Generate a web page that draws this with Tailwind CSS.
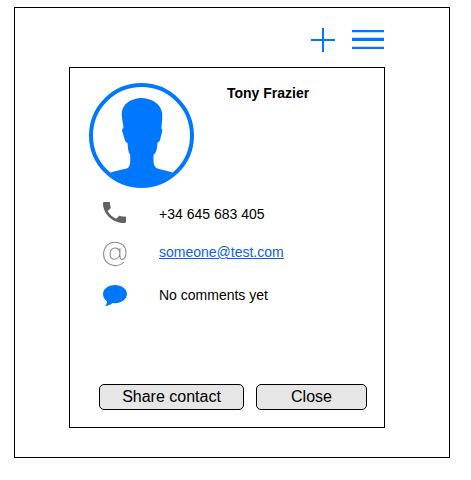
<!DOCTYPE html>
<html lang="en">
<head>
<meta charset="utf-8">
<title>Contact</title>
<script src="https://cdn.jsdelivr.net/npm/@tailwindcss/browser@4"></script>
</head>
<body class="bg-white text-black font-['Liberation_Sans',Arial,sans-serif] overflow-hidden">
<main class="ml-[14px] mt-[7px] w-[436px] h-[451px] border border-black">
  <header class="flex h-[59px] pt-5 pl-[296px] gap-[17px]">
    <svg class="w-6 h-6 shrink-0" viewBox="0 0 24 24" fill="#0077ff"><path d="M11 0h2v24h-2zM0 11h24v2H0z"/></svg>
    <svg class="w-8 h-6 shrink-0" viewBox="0 0 32 24" fill="#0077ff"><path d="M0 2h32v2.25H0zM0 9.700h32v3.300H0zM0 18.750h32V21H0z"/></svg>
  </header>
  <section class="ml-[54px] w-[316px] h-[361px] border border-black flex flex-col">
    <div class="flex pt-[15px] pl-[19px] gap-[33px]">
      <svg class="w-[105px] h-[105px] shrink-0" viewBox="0 0 105 105" fill="#0077ff">
        <circle cx="52.5" cy="52.5" r="50.5" fill="none" stroke="#0077ff" stroke-width="4"/>
        <path d="M21 89.800C26 87.800 32 87 37 85.800C40.500 85 41.300 81 41.200 77V71.500C39.500 70 39 66 38.500 60C36.500 59.500 35.800 57 35 54C34 50 32 46 34 45.500L34.500 44C33.500 39 33 35 32.700 31C33 25 36 20.500 41 17.700C46 15.400 50 14.900 53 14.900C57 15 60 16.300 64 17.700C69 20.500 72.800 25 73.200 31V37L72.300 45.400C74.500 46 72.500 51 71.700 54.500C71 57.500 70.500 59 68.500 59.500C68 66 67.500 70 64.500 71.800V77C64.600 81 65.500 84.500 68.500 85.500C73 87 79 87.600 84 89.800A49 49 0 0 1 52.500 102A49 49 0 0 1 21 89.800Z"/>
      </svg>
      <h1 class="text-[14px] leading-[20px] font-bold whitespace-nowrap">Tony Frazier</h1>
    </div>
    <ul class="pl-[33px] text-[14px]">
      <li class="flex items-center h-[49px] gap-8">
        <svg class="w-6 h-[21px] shrink-0" viewBox="0 0 24 21" fill="#626262"><path transform="scale(1.2778 1.1667) translate(-3 -3)" d="M6.620 10.790c1.440 2.830 3.760 5.140 6.590 6.590l2.200-2.200c.27-.27.67-.36 1.020-.24 1.120.37 2.330.57 3.570.57.55 0 1 .45 1 1V20c0 .55-.45 1-1 1-9.390 0-17-7.610-17-17 0-.55.45-1 1-1h3.500c.55 0 1 .45 1 1 0 1.250.2 2.450.57 3.570.11.35.03.74-.25 1.020l-2.200 2.200z"/></svg>
        <span class="whitespace-nowrap relative top-[2px]">+34 645 683 405</span>
      </li>
      <li class="flex items-center h-[33px] gap-8">
        <svg class="w-6 h-[26px] shrink-0" viewBox="0 0 24 26" fill="none" stroke="#8d8d8d" stroke-width="1.100">
          <path d="M20.800 21C18.600 23.500 15.700 24.700 12.200 24.600C5 24.400.6 19.700.6 13C.7 6 5.500 1.300 12 1.300C18.500 1.300 23 5.500 23 11.500C23 15.500 21.600 18.400 19 18.400C17.200 18.400 16.900 16.500 16.900 14.500V7.200M16.900 12C16.500 9 14.700 7 12 7C9 7 7 9.300 7 12.700C7 16.200 8.700 18.300 11.300 18.300C14.400 18.300 16.600 15.500 16.900 12"/>
        </svg>
        <a class="whitespace-nowrap text-[#0b62e4] underline relative -top-px" href="#">someone@test.com</a>
      </li>
      <li class="flex items-center h-[50px] gap-8">
        <svg class="w-6 h-[21px] shrink-0" viewBox="0 0 24 21" fill="#0077ff"><path d="M12 0C18.700 0 24 4 24 9.100S18.700 18.200 12 18.200C11.200 18.200 10.400 18.100 9.600 18C7.400 20 4.800 21 1.800 20.800C3.300 19.900 4 18.500 3.900 16.300C1.400 14.500 0 12 0 9.100C0 4 5.300 0 12 0Z"/></svg>
        <span class="whitespace-nowrap">No comments yet</span>
      </li>
    </ul>
    <footer class="mt-auto flex gap-3 pl-[29px] mb-[17px]">
      <button class="w-[145px] h-[26px] rounded-[5px] border border-black bg-[#e6e6e6] text-[16px] leading-[24px] whitespace-nowrap">Share contact</button>
      <button class="w-[111px] h-[26px] rounded-[5px] border border-black bg-[#e6e6e6] text-[16px] leading-[24px]">Close</button>
    </footer>
  </section>
</main>
</body>
</html>
